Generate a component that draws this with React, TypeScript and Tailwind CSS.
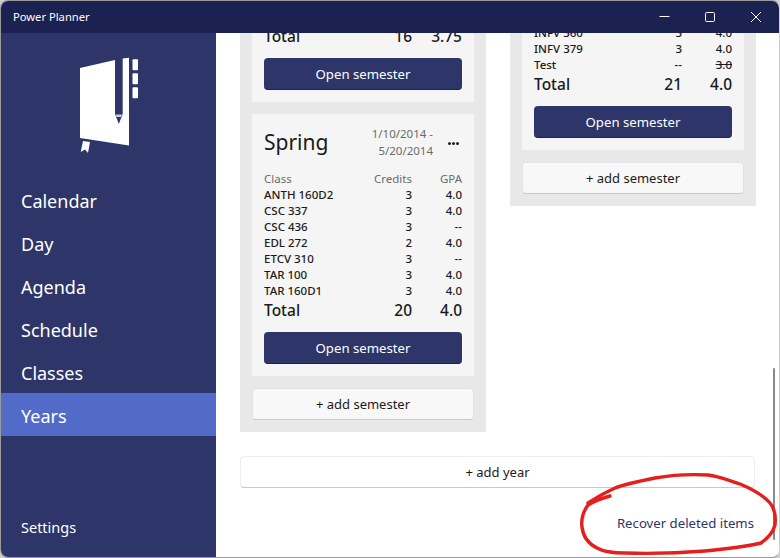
type Row = [string, string, string];

const font = { fontFamily: '"Noto Sans", sans-serif' };

const fall: Row[] = [
  ["ANTH 101", "3", "4.0"],
  ["CSC 211", "3", "3.5"],
  ["EDL 110", "3", "4.0"],
  ["TAR 120", "3", "3.5"],
  ["TAR 130", "2", "3.5"],
  ["ETCV 200", "2", "4.0"],
];

const spring: Row[] = [
  ["ANTH 160D2", "3", "4.0"],
  ["CSC 337", "3", "4.0"],
  ["CSC 436", "3", "--"],
  ["EDL 272", "2", "4.0"],
  ["ETCV 310", "3", "--"],
  ["TAR 100", "3", "4.0"],
  ["TAR 160D1", "3", "4.0"],
];

const other: Row[] = [
  ["CSC 110", "3", "4.0"],
  ["CSC 120", "3", "4.0"],
  ["INFV 101", "3", "4.0"],
  ["INFV 201", "3", "4.0"],
  ["INFV 250", "3", "4.0"],
  ["INFV 301", "0", "4.0"],
  ["INFV 360", "3", "4.0"],
  ["INFV 379", "3", "4.0"],
  ["Test", "--", "3.0"],
];

function SemesterCard({ name, dates, rows, credits, gpa }: { name: string; dates: string[]; rows: Row[]; credits: string; gpa: string }) {
  return (
    <div className="bg-[#f5f5f5] px-3 pb-3">
      <div className="h-[57px] flex items-start pt-[12px]">
        <div className="text-[21px] leading-[32px] text-[#1a1a1a] flex-1">{name}</div>
        <div className="text-[11.5px] leading-[16.5px] text-[#6b6b6b] text-right">
          {dates.map((d) => (
            <div key={d}>{d}</div>
          ))}
        </div>
        <div className="w-[29px] h-[34px] flex items-center justify-end pr-[3px] gap-[1px]">
          <span className="w-[3px] h-[3px] rounded-full bg-[#222]" />
          <span className="w-[3px] h-[3px] rounded-full bg-[#222]" />
          <span className="w-[3px] h-[3px] rounded-full bg-[#222]" />
        </div>
      </div>
      <div className="flex h-4 items-center text-[11.5px] text-[#6b6b6b]">
        <div className="flex-1">Class</div>
        <div className="text-right">Credits</div>
        <div className="w-[50px] text-right">GPA</div>
      </div>
      {rows.map(([c, cr, g]) => (
        <div key={c} className="flex h-4 items-center text-[11.5px] font-medium text-[#1a1a1a]">
          <div className="flex-1">{c}</div>
          <div className="text-right">{cr}</div>
          <div className={g === "3.0" ? "w-[50px] text-right line-through" : "w-[50px] text-right"}>{g}</div>
        </div>
      ))}
      <div className="flex h-[23px] items-center text-[15.5px] font-medium text-[#1a1a1a] mb-[10px]">
        <div className="flex-1">Total</div>
        <div className="text-right">{credits}</div>
        <div className="w-[50px] text-right">{gpa}</div>
      </div>
      <button className="w-full h-8 pt-[2px] rounded-[4px] bg-[#2e3569] border-b border-[#1b2150] text-white text-[13.2px]">
        Open semester
      </button>
    </div>
  );
}

function AddButton({ label, className }: { label: string; className: string }) {
  return (
    <button className={"h-8 pt-[2px] rounded-[4px] border border-b-[#c9c9c9] text-[13px] text-[#1a1a1a] " + className}>
      {label}
    </button>
  );
}

function Logo() {
  return (
    <svg width="65" height="100" viewBox="75 55 65 100" fill="white">
      <path d="M80 68 L115 60 V114 L118.8 124 L122.7 114 V58.5 L129 57.7 V145.5 L80 138 Z" />
      <path d="M115.5 114.5 H122.2 L121 117 H116.7 Z" fill="#c9cce0" />
      <path d="M83 141 L90 142 L88 153 L85 149.5 L80.7 152 Z" />
      <rect x="132.5" y="59.3" width="5.5" height="11" rx="1" />
      <rect x="132.5" y="73.3" width="5.5" height="11" rx="1" />
      <rect x="132.5" y="87.3" width="5.5" height="11" rx="1" />
    </svg>
  );
}

export default function App() {
  const nav = ["Calendar", "Day", "Agenda", "Schedule", "Classes", "Years"];

  return (
    <div className="w-[780px] h-[558px] bg-[#cfcfcf]" style={font}>
      <div className="relative w-full h-full rounded-lg border border-[#9a9a9a] border-r-[#d0d0d0] overflow-hidden flex flex-col bg-white">
        <header className="h-8 shrink-0 bg-[#1b2150] flex items-center justify-between text-white">
          <div className="text-[11.2px] pl-3">Power Planner</div>
          <div className="flex items-center">
            <div className="w-[46px] h-8 flex items-center justify-center">
              <svg width="12" height="12" viewBox="0 0 12 12" stroke="white" fill="none">
                <path d="M1.5 5.5 H11.5" />
              </svg>
            </div>
            <div className="w-[46px] h-8 flex items-center justify-center">
              <svg width="12" height="12" viewBox="0 0 12 12" stroke="white" fill="none">
                <rect x="1.5" y="1.5" width="9" height="9" rx="1.2" />
              </svg>
            </div>
            <div className="w-[46px] h-8 flex items-center justify-center">
              <svg width="12" height="12" viewBox="0 0 12 12" stroke="white" fill="none">
                <path d="M1 1 L11 11 M11 1 L1 11" />
              </svg>
            </div>
          </div>
        </header>

        <div className="flex flex-1 min-h-0">
          <aside className="w-[215px] shrink-0 bg-[#2e3569] flex flex-col text-white">
            <div className="h-[145px] pt-[22px] pl-[74px]">
              <Logo />
            </div>
            {nav.map((n) => (
              <div
                key={n}
                className={
                  n === "Years"
                    ? "h-[43px] flex items-center pl-5 pt-1 text-[18px] bg-[#536bc8]"
                    : "h-[43px] flex items-center pl-5 pt-1 text-[18px]"
                }
              >
                {n}
              </div>
            ))}
            <div className="mt-auto pl-5 pb-[18px] text-[14.5px]">Settings</div>
          </aside>

          <main className="flex-1 min-w-0 overflow-hidden pl-6 pr-[23px]">
            <div className="-mt-[189px]">
              <div className="flex items-start gap-6">
                <div className="w-[246px] bg-[#e8e8e8] p-3 flex flex-col gap-3">
                  <SemesterCard name="Fall" dates={["8/25/2013 -", "12/15/2013"]} rows={fall} credits="16" gpa="3.75" />
                  <SemesterCard name="Spring" dates={["1/10/2014 -", "5/20/2014"]} rows={spring} credits="20" gpa="4.0" />
                  <AddButton label="+ add semester" className="w-full bg-[#f8f8f8] border-[#e2e2e2]" />
                </div>
                <div className="w-[246px] bg-[#e8e8e8] p-3 flex flex-col gap-3">
                  <SemesterCard name="Fall" dates={["8/25/2014 -", "12/15/2014"]} rows={other} credits="21" gpa="4.0" />
                  <AddButton label="+ add semester" className="w-full bg-[#f8f8f8] border-[#e2e2e2]" />
                </div>
              </div>
              <AddButton label="+ add year" className="w-[515px] block mt-6 bg-white border-[#eeeeee]" />
              <div className="mt-[26px] text-right text-[13.2px] text-[#2e3569] pr-[2px]">Recover deleted items</div>
            </div>
          </main>
        </div>

        <div className="absolute left-[772px] top-[367px] w-[2px] h-[172px] bg-[#8a8a8a] rounded-full" />

        {/* hand drawn highlight over the link */}
        <svg className="absolute left-0 top-0 pointer-events-none" width="780" height="558" viewBox="1 1 780 558" fill="none">
          <path
            d="M610 496 C603 498 594 501 588 505 C583 512 581 520 582 527 C583 536 587 543 597 548 C604 552 612 553 625 553 C655 554 680 553 705 551 C725 549 745 547 761 543 C768 538 773 533 775 525 C776 516 775 509 770 503 C763 495 752 489 740 484 C728 480 718 476 708 475 C690 474 672 475 655 478 C640 481 625 484 615 488 C606 492 597 497 588 503"
            stroke="#e61e1e"
            strokeWidth="3.4"
            strokeLinecap="round"
            strokeLinejoin="round"
          />
        </svg>
      </div>
    </div>
  );
}
